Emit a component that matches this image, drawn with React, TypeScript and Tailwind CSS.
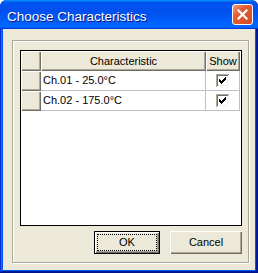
import React from "react";

const ui = "font-['Liberation_Sans',Arial,sans-serif]";

const rows = ["Ch.01 - 25.0°C", "Ch.02 - 175.0°C"];

// 7x7 classic check bitmap
const CHECK = ["......#", ".....##", "#...###", "##.###.", "#####..", ".###...", "..#...."];

function CheckMark() {
  return (
    <svg width="7" height="7" viewBox="0 0 7 7" shapeRendering="crispEdges">
      {CHECK.flatMap((r, y) =>
        [...r].map((c, x) =>
          c === "#" ? <rect key={`${x}-${y}`} x={x} y={y} width="1" height="1" fill="#000" /> : null,
        ),
      )}
    </svg>
  );
}

function Checkbox() {
  return (
    <span className="flex h-[13px] w-[13px] items-center justify-center bg-white shadow-[inset_1px_1px_0_#aca899,inset_-1px_-1px_0_#fff,inset_2px_2px_0_#716f64,inset_-2px_-2px_0_#f1efe2]">
      <CheckMark />
    </span>
  );
}

const hdr =
  "flex h-full items-center bg-[#ece9d8] shadow-[inset_1px_1px_0_#fff,inset_-1px_-1px_0_#716f64,inset_-2px_-2px_0_#aca899]";

function Grid() {
  return (
    <div className="flex h-[176px] w-[222px] flex-col border border-black bg-white text-[11px] text-black">
      <div className="flex h-[20px]">
        <div className={`${hdr} w-[20px]`} />
        <div className={`${hdr} w-[165px] justify-center`}>Characteristic</div>
        <div className={`${hdr} w-[34px] justify-center`}>Show</div>
      </div>
      {rows.map((r) => (
        <div key={r} className="flex h-[20px]">
          <div className={`${hdr} w-[20px]`} />
          <div className="flex w-[165px] items-center border-r border-b border-[#c0c0c0] pl-[2px]">{r}</div>
          <div className="flex w-[34px] items-center justify-center border-r border-b border-[#c0c0c0]">
            <Checkbox />
          </div>
        </div>
      ))}
    </div>
  );
}

export default function App() {
  return (
    <div
      className={`${ui} flex h-[273px] w-[258px] flex-col overflow-hidden rounded-t-[7px] bg-[#0055ea] shadow-[inset_-1px_-1px_0_#00138c,inset_1px_1px_0_#0831d9,inset_-2px_-2px_0_#001ea0,inset_2px_2px_0_#166aee]`}
    >
      {/* title bar */}
      <div className="flex h-[29px] items-center justify-between bg-[linear-gradient(180deg,#0997ff,#0053ee_8%,#0050ee_40%,#0066ff_88%,#0066ff_93%,#005bff_95%,#003dd7_96%,#003dd7)] pl-[7px] pr-[5px]">
        <span className="pt-[4px] text-[13.5px] leading-none text-white [text-shadow:1px_1px_#0f1089]">
          Choose Characteristics
        </span>
        <span className="flex h-[21px] w-[21px] items-center justify-center rounded-[3px] border border-white bg-[linear-gradient(135deg,#f3a07c,#e35d34_35%,#d64a1e)]">
          <svg width="11" height="11" viewBox="0 0 11 11">
            <path d="M1.5 1.5 L9.5 9.5 M9.5 1.5 L1.5 9.5" stroke="#fff" strokeWidth="2.2" strokeLinecap="square" />
          </svg>
        </span>
      </div>

      {/* client */}
      <div className="mx-[3px] mb-[3px] flex flex-1 bg-[#ece9d8] pt-[11px] pr-[8px] pb-[7px] pl-[9px]">
        <div className="flex flex-1 flex-col border border-[#aca899] pt-[9px] pr-[6px] pb-[7px] pl-[7px] shadow-[inset_1px_1px_0_#fff,1px_1px_0_#fff]">
          <Grid />
          <div className="mt-[5px] flex justify-end gap-[10px] text-[11px] text-black">
            <button className="flex h-[23px] w-[66px] border border-black bg-[#ece9d8] shadow-[inset_1px_1px_0_#fff,inset_-1px_-1px_0_#716f64,inset_-2px_-2px_0_#aca899]">
              <span className="mx-[2px] my-[2px] flex flex-1 items-center justify-center border border-dotted border-black">
                OK
              </span>
            </button>
            <button className="flex h-[23px] w-[72px] items-center justify-center bg-[#ece9d8] shadow-[inset_1px_1px_0_#fff,inset_-1px_-1px_0_#716f64,inset_-2px_-2px_0_#aca899]">
              Cancel
            </button>
          </div>
        </div>
      </div>
    </div>
  );
}
